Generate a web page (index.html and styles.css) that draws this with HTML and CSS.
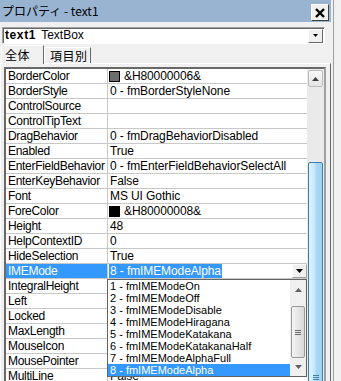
FILE: index.html
```html
<!DOCTYPE html>
<html lang="ja">
<head>
  <meta charset="UTF-8">
  <title>プロパティ - text1</title>
  <link rel="stylesheet" href="styles.css">
</head>
<body>
  <div class="window">
    <div class="titlebar">
      <span class="title">プロパティ - text1</span>
      <button class="close">
        <svg width="10" height="10" viewBox="0 0 10 10"><path d="M1 1L9 9M9 1L1 9" stroke="#000" stroke-width="2.4"/></svg>
      </button>
    </div>

    <div class="objbar">
      <div class="combo">
        <span class="combo-text"><b>text1</b> TextBox</span>
        <span class="combo-btn">
          <svg width="5" height="3" viewBox="0 0 5 3"><polygon points="0,0 5,0 2.5,3" fill="#000"/></svg>
        </span>
      </div>
    </div>

    <div class="tabs">
      <div class="tab active">全体</div>
      <div class="tab">項目別</div>
    </div>

    <div class="panel">
      <div class="grid">
        <div class="rows">
          <div class="row"><div class="name">BorderColor</div><div class="value"><span class="swatch gray"></span>&amp;H80000006&amp;</div></div>
          <div class="row"><div class="name">BorderStyle</div><div class="value">0 - fmBorderStyleNone</div></div>
          <div class="row"><div class="name">ControlSource</div><div class="value"></div></div>
          <div class="row"><div class="name">ControlTipText</div><div class="value"></div></div>
          <div class="row"><div class="name">DragBehavior</div><div class="value">0 - fmDragBehaviorDisabled</div></div>
          <div class="row"><div class="name">Enabled</div><div class="value">True</div></div>
          <div class="row"><div class="name">EnterFieldBehavior</div><div class="value">0 - fmEnterFieldBehaviorSelectAll</div></div>
          <div class="row"><div class="name">EnterKeyBehavior</div><div class="value">False</div></div>
          <div class="row"><div class="name">Font</div><div class="value">MS UI Gothic</div></div>
          <div class="row"><div class="name">ForeColor</div><div class="value"><span class="swatch black"></span>&amp;H80000008&amp;</div></div>
          <div class="row"><div class="name">Height</div><div class="value">48</div></div>
          <div class="row"><div class="name">HelpContextID</div><div class="value">0</div></div>
          <div class="row"><div class="name">HideSelection</div><div class="value">True</div></div>
          <div class="row selected">
            <div class="name">IMEMode</div>
            <div class="value">
              <span class="sel-text">8 - fmIMEModeAlpha</span>
              <span class="value-btn">
                <svg width="7" height="4" viewBox="0 0 7 4"><polygon points="0,0 7,0 3.5,4" fill="#000"/></svg>
              </span>
            </div>
            <div class="dropdown">
              <div class="options">
                <div class="option">1 - fmIMEModeOn</div>
                <div class="option">2 - fmIMEModeOff</div>
                <div class="option">3 - fmIMEModeDisable</div>
                <div class="option">4 - fmIMEModeHiragana</div>
                <div class="option">5 - fmIMEModeKatakana</div>
                <div class="option">6 - fmIMEModeKatakanaHalf</div>
                <div class="option">7 - fmIMEModeAlphaFull</div>
                <div class="option selected">8 - fmIMEModeAlpha</div>
              </div>
              <div class="list-scroll">
                <div class="ls-up">
                  <svg width="7" height="4" viewBox="0 0 7 4"><polygon points="0,4 7,4 3.5,0" fill="#606060"/></svg>
                </div>
                <div class="ls-thumb">
                  <span class="grip"></span><span class="grip"></span><span class="grip"></span>
                </div>
                <div class="ls-down">
                  <svg width="7" height="4" viewBox="0 0 7 4"><polygon points="0,0 7,0 3.5,4" fill="#606060"/></svg>
                </div>
              </div>
            </div>
          </div>
          <!-- values below are covered by the open list -->
          <div class="row"><div class="name">IntegralHeight</div><div class="value"></div></div>
          <div class="row"><div class="name">Left</div><div class="value"></div></div>
          <div class="row"><div class="name">Locked</div><div class="value"></div></div>
          <div class="row"><div class="name">MaxLength</div><div class="value"></div></div>
          <div class="row"><div class="name">MouseIcon</div><div class="value"></div></div>
          <div class="row"><div class="name">MousePointer</div><div class="value"></div></div>
          <div class="row"><div class="name">MultiLine</div><div class="value">False</div></div>
        </div>

        <div class="vscroll">
          <div class="vs-up">
            <svg width="7" height="4" viewBox="0 0 7 4"><polygon points="0,4 7,4 3.5,0" fill="#404040"/></svg>
          </div>
          <div class="vs-thumb">
            <span class="grip blue"></span><span class="grip blue"></span><span class="grip blue"></span>
          </div>
        </div>
      </div>
    </div>
  </div>
</body>
</html>
```

FILE: styles.css
```css
* {
  box-sizing: border-box;
}
html, body {
  margin: 0;
}
body {
  width: 341px;
  height: 381px;
  overflow: hidden;
  background: #f0f0f0;
  font-family: "Liberation Sans", "Noto Sans CJK JP", sans-serif;
  font-size: 12px;
  color: #000;
}
.window {
  width: 334px;
  height: 381px;
  border-right: 1px solid #a0a0a0;
}

/* title */
.titlebar {
  width: 331px;
  height: 22px;
  background: #99b4d1;
  display: flex;
  padding: 0 2px;
}
.title {
  flex: 1;
  font-family: "Noto Sans CJK JP", sans-serif;
  font-size: 12px;
  line-height: 22px;
}
.close {
  margin-top: 4px;
  width: 18px;
  height: 17px;
  padding: 0;
  background: #f0f0f0;
  border: 1px solid;
  border-color: #fff #404040 #404040 #fff;
  display: flex;
  align-items: center;
  justify-content: center;
}

/* object combo */
.objbar {
  height: 23px;
  padding: 5px 0 0 2px;
}
.combo {
  width: 323px;
  height: 17px;
  background: #fff;
  border: 1px solid;
  border-color: #a0a0a0 #fff #fff #a0a0a0;
  box-shadow: inset 1px 1px #696969;
  display: flex;
  align-items: center;
  padding-left: 2px;
}
.combo-text {
  font-size: 12px;
  line-height: 15px;
}
.combo-text b {
  letter-spacing: 0.6px;
  margin-right: 2px;
}
.combo-btn {
  margin-left: auto;
  margin-right: 1px;
  width: 15px;
  height: 14px;
  background: #f0f0f0;
  border: 1px solid;
  border-color: #fff #696969 #696969 #fff;
  display: flex;
  align-items: center;
  justify-content: center;
}

/* tabs */
.tabs {
  display: flex;
  align-items: flex-end;
  height: 18px;
  padding-left: 1px;
}
.tab {
  height: 16px;
  width: 47px;
  padding-left: 5px;
  font-family: "Noto Sans CJK JP", sans-serif;
  font-size: 12px;
  line-height: 15px;
  letter-spacing: 0.5px;
  border-top: 1px solid #fff;
  border-left: 1px solid #fff;
  border-right: 1px solid #696969;
}
.tab.active {
  height: 19px;
  width: 43px;
  padding-left: 3px;
  line-height: 17px;
  margin-bottom: -1px;
  background: #f0f0f0;
  position: relative;
  z-index: 1;
}

/* panel and grid */
.panel {
  width: 331px;
  height: 318px;
  overflow: hidden;
  border-top: 1px solid #fff;
  border-left: 1px solid #fff;
  border-right: 1px solid #696969;
  padding: 3px 0 0 3px;
}
.grid {
  display: flex;
  width: 322px;
  height: 400px;
  background: #fff;
  border: 2px solid;
  border-color: #696969 #a0a0a0 #a0a0a0 #696969;
}
.rows {
  width: 301px;
}
.row {
  display: flex;
  height: 15px;
  border-bottom: 1px solid #c8c8c8;
  position: relative;
}
.name {
  width: 102px;
  padding-left: 2px;
  line-height: 14px;
  letter-spacing: -0.3px;
  border-right: 1px solid #c8c8c8;
  white-space: nowrap;
  overflow: hidden;
}
.value {
  flex: 1;
  display: flex;
  align-items: center;
  padding-left: 2px;
  line-height: 14px;
  letter-spacing: -0.1px;
  white-space: nowrap;
  overflow: hidden;
}
.swatch {
  width: 11px;
  height: 11px;
  margin: 0 4px 0 -1px;
  border: 1px solid #000;
}
.swatch.gray {
  background: #6d6d6d;
}
.swatch.black {
  background: #000;
}
.row.selected .name {
  background: #3399ff;
  color: #fff;
}
.row.selected .value {
  overflow: visible;
}
.sel-text {
  background: #3399ff;
  color: #fff;
  padding: 0 1px;
  margin-left: -1px;
}
.value-btn {
  margin-left: auto;
  width: 15px;
  height: 14px;
  background: #f0f0f0;
  border: 1px solid;
  border-color: #fff #a0a0a0 #a0a0a0 #fff;
  display: flex;
  align-items: center;
  justify-content: center;
}

/* dropdown list */
.dropdown {
  position: absolute;
  left: 101px;
  top: 15px;
  width: 200px;
  height: 98px;
  background: #fff;
  border: 1px solid #646464;
  display: flex;
  z-index: 2;
}
.options {
  flex: 1;
}
.option {
  height: 12px;
  line-height: 12px;
  padding-left: 2px;
  font-size: 11px;
  white-space: nowrap;
}
.option.selected {
  background: #3399ff;
  color: #fff;
}
.list-scroll {
  width: 16px;
  background: #f0f0f0;
  display: flex;
  flex-direction: column;
  align-items: center;
}
.ls-up {
  height: 20px;
  display: flex;
  align-items: center;
  justify-content: center;
}
.ls-thumb {
  margin-top: 6px;
  width: 14px;
  height: 52px;
  border: 1px solid #9a9a9a;
  border-radius: 2px;
  background: linear-gradient(to right, #f4f4f4, #e6e6e6 50%, #d9d9d9);
  display: flex;
  flex-direction: column;
  align-items: center;
  justify-content: center;
  gap: 1px;
}
.ls-down {
  flex: 1;
  display: flex;
  align-items: center;
  justify-content: center;
}
.grip {
  width: 6px;
  height: 1px;
  background: #6a6a6a;
}

/* main scrollbar */
.vscroll {
  width: 17px;
  background: #eaeaea;
  display: flex;
  flex-direction: column;
  align-items: center;
}
.vs-up {
  margin-top: 1px;
  width: 15px;
  height: 17px;
  border: 1px solid #bcbcbc;
  border-radius: 2px;
  background: linear-gradient(#f8f8f8, #e3e3e3);
  display: flex;
  align-items: center;
  justify-content: center;
}
.vs-thumb {
  margin-top: 75px;
  width: 15px;
  height: 300px;
  border: 1px solid #3c7fb1;
  border-radius: 2px;
  background: linear-gradient(to right, #e3f4fc, #c4e5f6 45%, #a9d9f4 55%, #9fd2ef);
  display: flex;
  flex-direction: column;
  align-items: center;
  gap: 1px;
  padding-top: 212px;
}
.grip.blue {
  background: #3c7fb1;
}
```
